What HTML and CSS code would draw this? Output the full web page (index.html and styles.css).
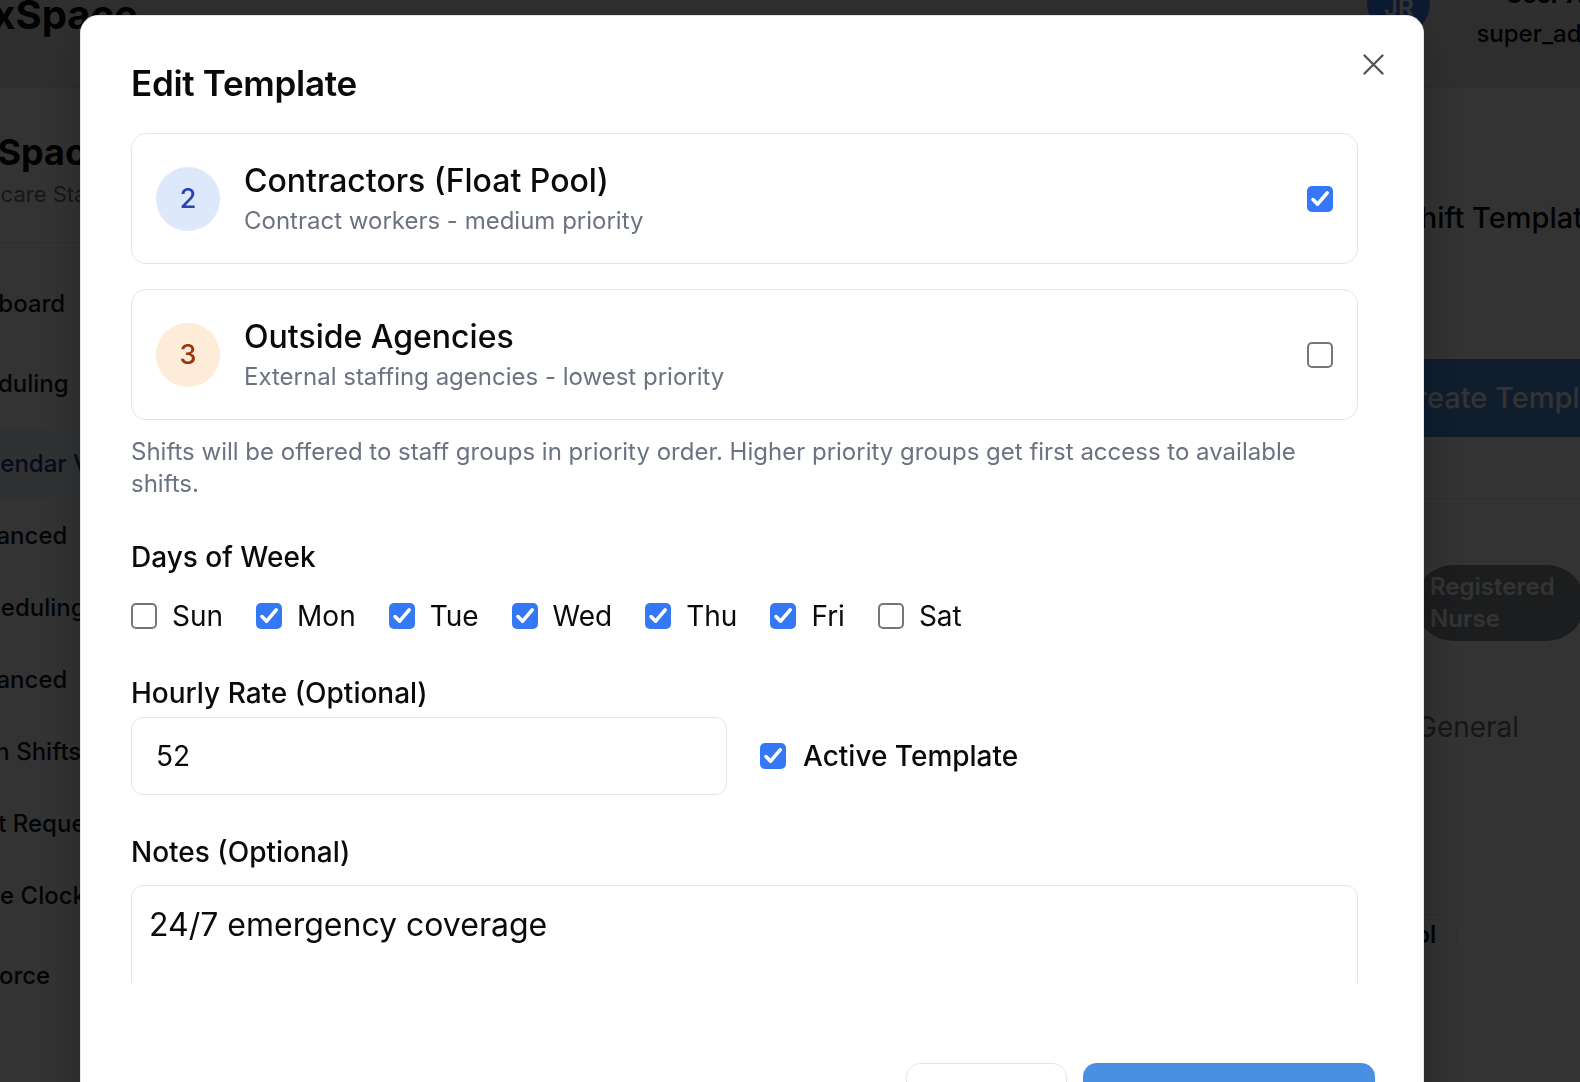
FILE: index.html
```html
<!DOCTYPE html>
<html lang="en">
<head>
<meta charset="utf-8">
<title>Edit Template</title>
<link rel="stylesheet" href="styles.css">
</head>
<body>
<div class="app">
  <header class="topbar">
    <div class="brand">FlexSpace</div>
    <div class="user">
      <div class="avatar">JR</div>
      <div class="user-info">
        <div class="user-name">User Admin</div>
        <div class="role-pill">super_admin</div>
      </div>
    </div>
  </header>
  <div class="shell">
    <aside class="sidebar">
      <div class="side-brand">
        <div class="side-title">FlexSpace</div>
        <div class="side-sub">Healthcare Staffing</div>
      </div>
      <nav class="nav">
        <div class="nav-item in-10">Dashboard</div>
        <div class="nav-item in-10 spaced">Scheduling</div>
        <div class="nav-item active in-33 spaced">Calendar View</div>
        <div class="nav-item in-21">Advanced</div>
        <div class="nav-item in-27">Scheduling</div>
        <div class="nav-item in-21">Advanced</div>
        <div class="nav-item in-18">Open Shifts</div>
        <div class="nav-item in-24">Shift Requests</div>
        <div class="nav-item in-27">Time Clock</div>
        <div class="nav-item in-0 spaced">Workforce</div>
      </nav>
    </aside>
    <main class="main">
      <div class="tabs">Shift Templates</div>
      <div class="create-btn">Create Template</div>
      <div class="table-head"></div>
      <div class="role-badge">Registered Nurse</div>
      <div class="dept">General</div>
      <div class="pool-pill">Float Pool</div>
    </main>
  </div>
</div>

<div class="overlay"></div>

<div class="modal" role="dialog">
  <h2 class="modal-title">Edit Template</h2>
  <button class="close" aria-label="Close">
    <svg width="21" height="21" viewBox="0 0 21 21"><path d="M1.5 1.5 L19.5 19.5 M19.5 1.5 L1.5 19.5"/></svg>
  </button>

  <div class="modal-body">
    <div class="group-list">
      <div class="group-card">
        <div class="prio prio-blue">2</div>
        <div class="group-text">
          <div class="group-name">Contractors (Float Pool)</div>
          <div class="group-desc">Contract workers - medium priority</div>
        </div>
        <span class="cb on"><svg viewBox="0 0 26 26"><path d="M6 13.6 L10.6 18.2 L20.2 6.8"/></svg></span>
      </div>
      <div class="group-card">
        <div class="prio prio-orange">3</div>
        <div class="group-text">
          <div class="group-name">Outside Agencies</div>
          <div class="group-desc">External staffing agencies - lowest priority</div>
        </div>
        <span class="cb"></span>
      </div>
    </div>

    <p class="helper">Shifts will be offered to staff groups in priority order. Higher priority groups get first access to available shifts.</p>

    <div class="field days-field">
      <div class="label">Days of Week</div>
      <div class="days">
        <div class="day"><span class="cb"></span><span>Sun</span></div>
        <div class="day"><span class="cb on"><svg viewBox="0 0 26 26"><path d="M6 13.6 L10.6 18.2 L20.2 6.8"/></svg></span><span>Mon</span></div>
        <div class="day"><span class="cb on"><svg viewBox="0 0 26 26"><path d="M6 13.6 L10.6 18.2 L20.2 6.8"/></svg></span><span>Tue</span></div>
        <div class="day"><span class="cb on"><svg viewBox="0 0 26 26"><path d="M6 13.6 L10.6 18.2 L20.2 6.8"/></svg></span><span>Wed</span></div>
        <div class="day"><span class="cb on"><svg viewBox="0 0 26 26"><path d="M6 13.6 L10.6 18.2 L20.2 6.8"/></svg></span><span>Thu</span></div>
        <div class="day"><span class="cb on"><svg viewBox="0 0 26 26"><path d="M6 13.6 L10.6 18.2 L20.2 6.8"/></svg></span><span>Fri</span></div>
        <div class="day"><span class="cb"></span><span>Sat</span></div>
      </div>
    </div>

    <div class="rate-row">
      <div class="field">
        <div class="label">Hourly Rate (Optional)</div>
        <div class="input">52</div>
      </div>
      <div class="active-toggle">
        <span class="cb on"><svg viewBox="0 0 26 26"><path d="M6 13.6 L10.6 18.2 L20.2 6.8"/></svg></span>
        <span>Active Template</span>
      </div>
    </div>

    <div class="field notes-field">
      <div class="label">Notes (Optional)</div>
      <div class="textarea">24/7 emergency coverage</div>
    </div>
  </div>

  <div class="modal-foot">
    <button class="btn btn-cancel">Cancel</button>
    <button class="btn btn-save">Update Template</button>
  </div>
</div>
</body>
</html>
```

FILE: styles.css
```css
* { box-sizing: border-box; }

html, body {
  margin: 0;
  padding: 0;
}

body {
  width: 1580px;
  height: 1082px;
  overflow: hidden;
  font-family: "Inter", "Noto Sans", sans-serif;
  color: #0a0a0a;
  background: #ffffff;
}

/* ---------- background application ---------- */
.app {
  width: 1725px;
  margin-left: -70px;
}

.topbar {
  height: 88px;
  display: flex;
  justify-content: space-between;
  align-items: flex-start;
  padding-right: 13px;
  background: #ebebeb;
  border-bottom: 1px solid #dcdcdc;
}

.brand {
  font-size: 40px;
  font-weight: 700;
  line-height: 48px;
  margin-top: -9px;
  padding-left: 5px;
}

.user {
  display: flex;
  gap: 35px;
  margin-top: -28px;
}

.avatar {
  width: 63px;
  height: 63px;
  border-radius: 50%;
  background: #3b82f6;
  color: #fff;
  font-size: 24px;
  font-weight: 600;
  display: flex;
  align-items: center;
  justify-content: center;
  padding-top: 8px;
}

.user-info {
  display: flex;
  flex-direction: column;
  align-items: flex-start;
  margin-top: 7px;
  gap: 5px;
}

.user-name {
  font-size: 24px;
  font-weight: 700;
  line-height: 32px;
  padding-left: 40px;
}

.role-pill {
  height: 36px;
  line-height: 36px;
  padding: 0 12px 0 11px;
  border-radius: 18px;
  background: #e5e7eb;
  font-size: 24px;
  font-weight: 500;
}

.shell {
  display: flex;
}

.sidebar {
  width: 340px;
  flex: none;
  border-right: 1px solid #e5e7eb;
}

.side-brand {
  padding: 40px 0 33px 0;
  border-bottom: 1px solid #e5e7eb;
  text-indent: -5px;
}

.side-title {
  font-size: 36px;
  font-weight: 700;
  line-height: 48px;
}

.side-sub {
  font-size: 22px;
  line-height: 33px;
  margin-top: 2px;
  margin-bottom: -2px;
  color: #6b7280;
  text-indent: 3px;
}

.nav {
  padding-top: 25px;
}

.nav-item {
  height: 72px;
  line-height: 72px;
  font-size: 24px;
  font-weight: 500;
  white-space: nowrap;
  color: #111827;
}

.nav-item.spaced { margin-top: 8px; }
.nav-item.in-0 { text-indent: 0; }
.nav-item.in-10 { text-indent: 10px; }
.nav-item.in-18 { text-indent: 18px; }
.nav-item.in-21 { text-indent: 21px; }
.nav-item.in-24 { text-indent: 24px; }
.nav-item.in-27 { text-indent: 27px; }
.nav-item.in-33 { text-indent: 33px; }
.nav-item.active {
  color: #1e3a8a;
  background: #eff6ff;
}

.main {
  flex: 1;
  display: flex;
  flex-direction: column;
  align-items: flex-start;
  padding-left: 1020px;
}

.tabs {
  margin-top: 97px;
  height: 65px;
  line-height: 65px;
  font-size: 29px;
  font-weight: 500;
  padding-left: 111px;
  white-space: nowrap;
}

.create-btn {
  margin-top: 109px;
  margin-left: 85px;
  width: 320px;
  height: 78px;
  line-height: 78px;
  padding-left: 20px;
  border-radius: 12px;
  background: #4a90e2;
  color: #fff;
  font-size: 29px;
  font-weight: 500;
  white-space: nowrap;
}

.table-head {
  align-self: stretch;
  height: 62px;
  border-bottom: 1px solid #e5e7eb;
}

.role-badge {
  margin-top: 66px;
  margin-left: 125px;
  width: 170px;
  padding: 6px 15px;
  border-radius: 38px;
  background: #8b8f96;
  color: #fff;
  font-size: 24px;
  font-weight: 600;
  line-height: 32px;
}

.dept {
  margin-top: 65px;
  margin-left: 126px;
  font-size: 28px;
  line-height: 42px;
  color: #71717a;
}

.pool-pill {
  margin-top: 166px;
  margin-left: 10px;
  height: 42px;
  line-height: 39px;
  padding: 0 21px;
  border: 1.5px solid #e5e7eb;
  border-radius: 999px;
  font-size: 24px;
  font-weight: 600;
  white-space: nowrap;
}

/* ---------- overlay + modal ---------- */
.overlay {
  position: fixed;
  inset: 0;
  background: rgba(0, 0, 0, 0.8);
}

.modal {
  position: fixed;
  left: 80px;
  top: 15px;
  width: 1344px;
  height: 1140px;
  background: #ffffff;
  border: 1px solid #e4e4e7;
  border-radius: 18px;
  box-shadow: 0 20px 50px rgba(0, 0, 0, 0.25);
  padding: 46px 48px 0 50px;
  display: flex;
  flex-direction: column;
}

.modal-title {
  margin: 0 0 29px 0;
  font-size: 35px;
  font-weight: 600;
  line-height: 42px;
  letter-spacing: -0.3px;
  color: #0a0a0a;
}

.close {
  position: absolute;
  top: 38px;
  right: 39px;
  width: 21px;
  height: 21px;
  padding: 0;
  border: 0;
  background: transparent;
  display: flex;
}

.close svg path {
  stroke: #52525b;
  stroke-width: 2.3;
  stroke-linecap: round;
  fill: none;
}

.modal-body {
  height: 850px;
  flex: none;
  overflow: hidden;
  padding-right: 17px;
  display: flex;
  flex-direction: column;
}

.group-list {
  display: flex;
  flex-direction: column;
  gap: 25px;
}

.group-card {
  display: flex;
  align-items: center;
  gap: 24px;
  padding: 24px;
  border: 1.5px solid #e5e5e5;
  border-radius: 15px;
}

.prio {
  width: 64px;
  height: 64px;
  flex: none;
  border-radius: 50%;
  display: flex;
  align-items: center;
  justify-content: center;
  font-size: 27px;
  font-weight: 500;
}

.prio-blue { background: #dde9fb; color: #2744b0; }
.prio-orange { background: #fdecd7; color: #9a3412; }

.group-text {
  flex: 1;
  display: flex;
  flex-direction: column;
}

.group-name {
  font-size: 32px;
  font-weight: 500;
  line-height: 45px;
  color: #0a0a0a;
}

.group-desc {
  font-size: 24px;
  line-height: 36px;
  color: #6b7280;
}

/* checkbox */
.cb {
  width: 26px;
  height: 26px;
  flex: none;
  border-radius: 5px;
  border: 2px solid #767676;
  background: #ffffff;
  display: inline-flex;
}

.cb.on {
  border: 0;
  background: #3478f6;
}

.cb svg {
  width: 26px;
  height: 26px;
}

.cb svg path {
  fill: none;
  stroke: #ffffff;
  stroke-width: 3.6;
  stroke-linecap: round;
  stroke-linejoin: round;
}

.helper {
  margin: 16px 0 0 0;
  font-size: 24px;
  line-height: 32px;
  color: #6b7280;
}

.field {
  display: flex;
  flex-direction: column;
}

.label {
  font-size: 28px;
  font-weight: 500;
  line-height: 36px;
  color: #0a0a0a;
}

.days-field { margin-top: 39px; }

.days {
  margin-top: 20px;
  display: flex;
  gap: 33px;
}

.day {
  display: flex;
  align-items: center;
  gap: 15px;
  font-size: 28px;
  line-height: 42px;
  color: #0a0a0a;
}

.rate-row {
  margin-top: 38px;
  display: grid;
  grid-template-columns: 596px 1fr;
  gap: 33px;
  align-items: end;
}

.rate-row .label { margin-bottom: 6px; }

.input {
  height: 78px;
  border: 1.5px solid #e5e5e5;
  border-radius: 12px;
  padding: 0 24px;
  display: flex;
  align-items: center;
  font-size: 28px;
  color: #0a0a0a;
}

.active-toggle {
  height: 78px;
  display: flex;
  align-items: center;
  gap: 17px;
  font-size: 28px;
  font-weight: 500;
}

.notes-field { margin-top: 39px; }
.notes-field .label { margin-bottom: 15px; }

.textarea {
  height: 190px;
  border: 1.5px solid #e5e5e5;
  border-radius: 12px;
  padding: 18px 17px;
  font-size: 32px;
  line-height: 42px;
  color: #0a0a0a;
}

.modal-foot {
  padding-top: 80px;
  display: flex;
  justify-content: flex-end;
  gap: 16px;
}

.btn {
  height: 63px;
  border-radius: 14px;
  font-family: inherit;
  font-size: 24px;
  font-weight: 500;
}

.btn-cancel {
  width: 161px;
  background: #ffffff;
  border: 1.5px solid #e5e5e5;
  color: #0a0a0a;
}

.btn-save {
  width: 292px;
  background: #4a90e2;
  border: 0;
  color: #ffffff;
}
```
